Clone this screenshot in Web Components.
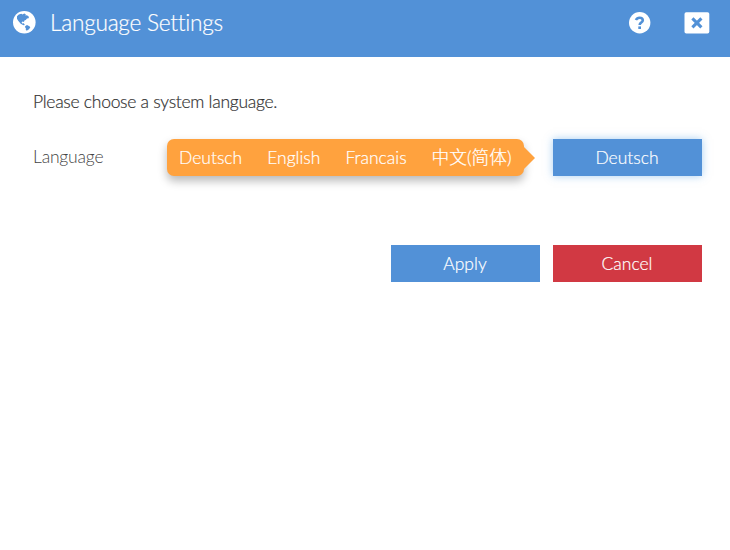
<!DOCTYPE html>
<html lang="en">
<head>
<meta charset="utf-8">
<title>Language Settings</title>
<style>
html,body{margin:0;height:100%;background:#fff;overflow:hidden}
body{font-family:Lato,"Noto Sans CJK SC",sans-serif;font-weight:300;color:#333;font-variant-ligatures:none}
</style>
</head>
<body>
<settings-dialog>
  <dialog-header slot="header">Language Settings</dialog-header>
  <span slot="intro">Please choose a system language.</span>
  <span slot="label">Language</span>
  <option-bubble slot="options">
    <bubble-option>Deutsch</bubble-option><bubble-option>English</bubble-option><bubble-option>Francais</bubble-option><bubble-option class="cjk">中文(简体)</bubble-option>
  </option-bubble>
  <flat-button slot="current" kind="glow">Deutsch</flat-button>
  <flat-button slot="actions">Apply</flat-button>
  <flat-button slot="actions" kind="danger">Cancel</flat-button>
</settings-dialog>
<script>
function define(name, html) {
  const template = document.createElement('template');
  template.innerHTML = html;
  customElements.define(name, class extends HTMLElement {
    constructor() {
      super();
      this.attachShadow({mode: 'open'}).append(template.content.cloneNode(true));
    }
  });
}

define('ui-icon-globe', `<style>:host{display:block;width:24px;height:24px}svg{display:block}</style>
<svg width="24" height="24" viewBox="0 0 24 24"><circle cx="12.3" cy="12.2" r="11.3" fill="#fff"/>
<path fill="#5291d7" d="M5 6.2 6.8 4.4 9.3 3.7 10.6 4.6 12.2 3.6 13.8 4.3 13.4 5.5 15 5.3 16.9 6.8 16.7 8.2 15 8.5 13.8 9.9 12.4 10.5 12 12 10.6 11.4 9.6 12.2 10.2 13.4 11.8 13.2 12.8 15 11.5 15.2 8.7 13.8 6.2 10.8 5 8.8Z"/>
<path fill="#5291d7" d="M13.4 16 15 15 17.4 16.3 18.3 17.3 17 19.2 14.7 20.8 13.7 19.6 13.9 18.2 12.9 17Z"/></svg>`);

define('ui-icon-help', `<style>:host{display:block;width:22px;height:22px}svg{display:block}</style>
<svg width="22" height="22" viewBox="0 0 22 22"><circle cx="10.7" cy="10.8" r="10.7" fill="#fff"/>
<path fill="none" stroke="#5291d7" stroke-width="2.6" d="M6.9 8C7.7 6.4 8.9 5.7 10.5 5.7c1.9 0 3.3 1 3.3 2.6 0 2.3-3.1 2.2-3.1 4.6"/>
<rect x="9.3" y="14.4" width="2.7" height="2.6" fill="#5291d7"/></svg>`);

define('ui-icon-close', `<style>:host{display:block;width:26px;height:22px}svg{display:block}</style>
<svg width="26" height="22" viewBox="0 0 26 22"><rect x=".5" y=".2" width="24.8" height="21.3" rx="1.8" fill="#fff"/>
<path stroke="#5291d7" stroke-width="3.1" d="M8.4 6.3 17.4 15.3M17.4 6.3 8.4 15.3"/></svg>`);

define('dialog-header', `<style>
:host{display:flex;box-sizing:border-box;height:57px;background:#5291d7;color:#fff;padding:0 20px 0 12px;align-items:flex-start}
h1{margin:9px 0 0 14px;font-size:22.7px;line-height:28px;letter-spacing:-.27px;font-weight:300;flex:1;white-space:nowrap;-webkit-text-stroke:.2px currentColor}
ui-icon-globe{margin-top:10px}ui-icon-help{margin:12px 33px 0 0}ui-icon-close{margin-top:12px}
</style><ui-icon-globe></ui-icon-globe><h1><slot></slot></h1><ui-icon-help></ui-icon-help><ui-icon-close></ui-icon-close>`);

define('bubble-option', `<style>
:host{display:block;white-space:nowrap;font-size:17.5px;line-height:38px;-webkit-text-stroke:.2px currentColor}
:host(.cjk){font-size:17.7px}
</style><slot></slot>`);

define('option-bubble', `<style>
:host{display:flex;position:relative;box-sizing:border-box;width:357px;height:37px;padding:0 12.5px 0 12px;justify-content:space-between;background:#ffa23e;color:#fff;border-radius:7px;box-shadow:0 5px 10px rgba(0,0,0,.28)}
:host::after{content:"";position:absolute;left:356px;top:7px;border:12px solid transparent;border-right:0;border-left:12px solid #ffa23e}
</style><slot></slot>`);

define('flat-button', `<style>
:host{display:block;box-sizing:border-box;width:149px;height:37px;padding-right:1px;background:#5291d7;color:#fff;text-align:center;font-size:17.5px;line-height:38px;-webkit-text-stroke:.2px currentColor}
:host([kind=danger]){background:#d13943}
:host([kind=glow]){box-shadow:0 0 8px rgba(82,160,230,.5)}
</style><slot></slot>`);

define('settings-dialog', `<style>
:host{display:block}
main{padding:32px 28px 0 33px}
p{margin:0;height:26px;font-size:17.5px;line-height:26px;letter-spacing:-.28px;white-space:nowrap;-webkit-text-stroke:.2px currentColor}
.row{display:grid;grid-template-columns:134px 1fr 149px;margin-top:24px}
.label{font-size:17.5px;line-height:36px;letter-spacing:-.2px;color:#444}
.actions{display:flex;justify-content:flex-end;gap:13px;margin-top:69px}
</style><slot name="header"></slot>
<main><p><slot name="intro"></slot></p>
<div class="row"><div class="label"><slot name="label"></slot></div><slot name="options"></slot><slot name="current"></slot></div>
<div class="actions"><slot name="actions"></slot></div></main>`);
</script>
</body>
</html>
